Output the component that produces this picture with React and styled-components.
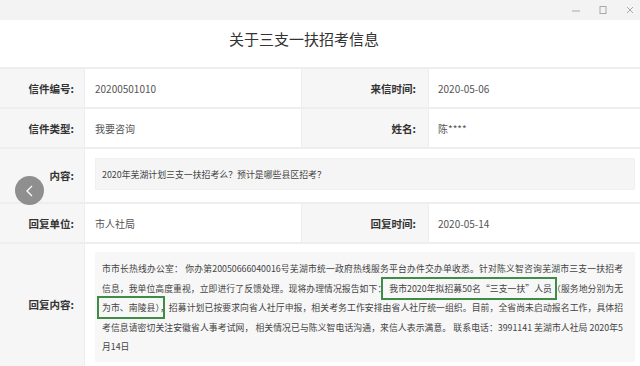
import React from "react";
import styled, { createGlobalStyle } from "styled-components";

const GlobalStyle = createGlobalStyle`
  html, body { margin: 0; padding: 0; background: #ffffff; }
  body { font-family: "Noto Sans CJK SC", "Noto Sans", sans-serif; }
  * { box-sizing: border-box; }
`;

const Window = styled.div`
  width: 640px;
  height: 366px;
  overflow: hidden;
  position: relative;
  background: #ffffff;
`;

const TitleBar = styled.div`
  height: 20px;
  background: #f3f3f3;
  display: flex;
  justify-content: flex-end;
  align-items: center;
  gap: 17px;
  padding-right: 5px;
`;

const Ctl = styled.span`
  width: 10px;
  height: 10px;
  display: flex;
  align-items: center;
  justify-content: center;
  color: #a8a8a8;
`;

const Header = styled.div`
  height: 47px;
  display: flex;
  justify-content: center;
  align-items: flex-start;
  padding: 9px 32px 0 0;
`;

const Title = styled.h1`
  margin: 0;
  font-size: 15px;
  line-height: 20px;
  font-weight: 400;
  color: #333333;
`;

const Table = styled.div`
  display: grid;
  grid-template-columns: 84px 216px 126px 1fr;
  grid-template-rows: 38px 38px 53px 38px auto;
  column-gap: 1px;
  row-gap: 2px;
  padding-top: 2px;
  background: #eeeeee;
`;

const Label = styled.div`
  background: #f6f6f6;
  display: flex;
  align-items: center;
  justify-content: flex-end;
  padding-right: ${(p) => (p.$right ? "12px" : "10px")};
  font-size: 10.5px;
  font-weight: 700;
  color: #333333;
`;

const Value = styled.div`
  background: #ffffff;
  display: flex;
  align-items: center;
  padding-left: ${(p) => (p.$right ? "9px" : "10px")};
  font-size: 10px;
  color: #555555;
  grid-column: ${(p) => (p.$wide ? "2 / 5" : "auto")};
`;

const BoxCell = styled.div`
  background: #ffffff;
  grid-column: 2 / 5;
  padding: ${(p) => (p.$tall ? "8px 5px 4px 10px" : "9px 5px 0 10px")};
`;

const ContentBox = styled.div`
  height: 32px;
  background: #f5f5f5;
  border: 1px solid #f0f0f0;
  display: flex;
  align-items: center;
  padding-left: 6px;
  font-size: 8.9px;
  color: #444444;
`;

const ReplyBox = styled.div`
  background: #f7f7f7;
  padding: 7px 12px 5px 7px;
  font-size: 8.8px;
  color: #444444;
`;

const Line = styled.div`
  line-height: 19.5px;
  height: 19.5px;
  white-space: nowrap;
  text-align: justify;
  text-align-last: ${(p) => (p.$last ? "left" : "justify")};
`;

const Mark = styled.span`
  outline: 2px solid #3e8c46;
  outline-offset: 3px;
  padding-left: ${(p) => (p.$pad ? "3px" : "0")};
`;

const BackButton = styled.div`
  position: absolute;
  left: 15px;
  top: 176px;
  width: 29px;
  height: 29px;
  border-radius: 50%;
  background: rgba(120, 120, 120, 0.82);
  display: flex;
  align-items: center;
  justify-content: center;
`;

export default function App() {
  return (
    <>
      <GlobalStyle />
      <Window>
        <TitleBar>
          <Ctl>
            <svg width="10" height="10" viewBox="0 0 10 10">
              <line x1="1" y1="6" x2="9" y2="6" stroke="#a8a8a8" strokeWidth="1" />
            </svg>
          </Ctl>
          <Ctl>
            <svg width="10" height="10" viewBox="0 0 10 10">
              <rect x="2" y="1.5" width="6" height="7" fill="none" stroke="#a8a8a8" strokeWidth="1" />
            </svg>
          </Ctl>
          <Ctl>
            <svg width="10" height="10" viewBox="0 0 10 10">
              <path d="M2 2 L8 8 M8 2 L2 8" stroke="#a8a8a8" strokeWidth="1" />
            </svg>
          </Ctl>
        </TitleBar>
        <Header>
          <Title>关于三支一扶招考信息</Title>
        </Header>
        <Table>
          <Label>信件编号:</Label>
          <Value>20200501010</Value>
          <Label $right>来信时间:</Label>
          <Value $right>2020-05-06</Value>

          <Label>信件类型:</Label>
          <Value>我要咨询</Value>
          <Label $right>姓名:</Label>
          <Value $right>陈****</Value>

          <Label>内容:</Label>
          <BoxCell>
            <ContentBox>2020年芜湖计划三支一扶招考么？预计是哪些县区招考？</ContentBox>
          </BoxCell>

          <Label>回复单位:</Label>
          <Value>市人社局</Value>
          <Label $right>回复时间:</Label>
          <Value $right>2020-05-14</Value>

          <Label>回复内容:</Label>
          <BoxCell $tall>
            <ReplyBox>
              <Line>市市长热线办公室： 你办第20050666040016号芜湖市统一政府热线服务平台办件交办单收悉。针对陈义智咨询芜湖市三支一扶招考</Line>
              <Line>
                信息，我单位高度重视，立即进行了反馈处理。现将办理情况报告如下：
                <Mark $pad>我市2020年拟招募50名“三支一扶”人员</Mark>
                （服务地分别为无
              </Line>
              <Line>
                <Mark>为市、南陵县）</Mark>
                ，招募计划已按要求向省人社厅申报，相关考务工作安排由省人社厅统一组织。目前，全省尚未启动报名工作，具体招
              </Line>
              <Line>考信息请密切关注安徽省人事考试网， 相关情况已与陈义智电话沟通，来信人表示满意。 联系电话：3991141 芜湖市人社局 2020年5</Line>
              <Line $last>月14日</Line>
            </ReplyBox>
          </BoxCell>
        </Table>
        <BackButton>
          <svg width="12" height="14" viewBox="0 0 12 14">
            <polyline points="8,2 3,7 8,12" fill="none" stroke="#ffffff" strokeWidth="1.3" />
          </svg>
        </BackButton>
      </Window>
    </>
  );
}
